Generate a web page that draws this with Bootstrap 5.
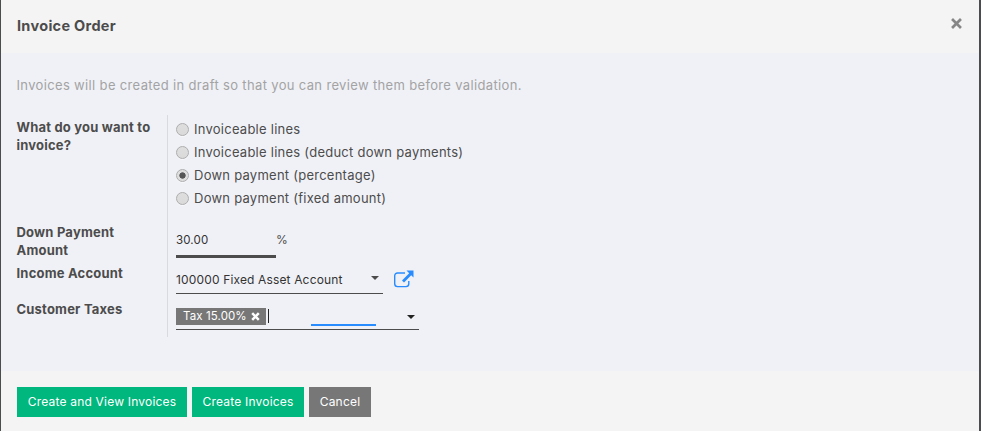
<!DOCTYPE html>
<html lang="en">
<head>
<meta charset="utf-8">
<meta name="viewport" content="width=device-width, initial-scale=1">
<title>Invoice Order</title>
<link href="https://cdn.jsdelivr.net/npm/bootstrap@5.3.0/dist/css/bootstrap.min.css" rel="stylesheet">
<style>
body{font-family:Inter,"Liberation Sans",sans-serif;font-size:13px;line-height:18px;color:#4c4c4c;background:#4b4c4e;overflow:hidden}
.dialog-shell{width:978px;height:431px;margin-left:1px;background:#f0f1f6}
.dialog-head,.dialog-foot{background:#f4f4f4;flex:none;padding:0 16px}
.dialog-head{height:53px;padding-bottom:1px}
.dialog-foot{height:60px;gap:5px;padding-top:2px}
.dialog-head h1{font-size:14.5px;line-height:20px;letter-spacing:.3px;margin:0}
.close-x{width:11px;height:11px;margin:-5px 1px 0 0;padding:0;border:0;background:none;line-height:0;color:#868686}
.body-inner{padding-left:15px}
.hint{color:#a3a3a5;margin:23px 0 21px;padding-left:.5px;letter-spacing:.345px}
.field-label{width:151px;flex:none;font-weight:700;padding:3px 10px 0 .5px;letter-spacing:.2px}
.field-value{border-left:1px solid #d9dadd;padding-left:8px}
.row-choice{height:105px}.row-amount{height:41px}.row-account{height:36px}.row-tax{height:40px}
.choices{padding-top:3px}
.choice{height:23px;gap:5px;letter-spacing:.25px}
.choice span{padding-bottom:2px}
.choice input{appearance:none;width:13px;height:13px;margin:0;border:1px solid #adadad;border-radius:50%;background:linear-gradient(#dedede,#dadada);box-shadow:0 1px 0 #fff8}
.choice input:checked{background:radial-gradient(circle,#555 0 2.8px,#dedede 3.5px)}
.line-input{font-size:12px;color:#333;border:0;background:none;border-radius:0;padding:0;outline:0;letter-spacing:.15px}
.amount-input{width:100px;height:33px;margin-top:5px;border-bottom:3px solid #4c4c4c;font-size:11.5px}
.percent{margin-top:11px;font-size:12px}
.account-box{width:207px;height:33px;padding:5px 4px 0 0;border-bottom:1px solid #4c4c4c}
.account-arrow{margin-top:-4px}
.open-icon{margin:9px 0 0 11px}
.tax-box{width:243px;height:22px;margin-top:11px;border-bottom:1px solid #4c4c4c}
.tax-tag{width:90px;height:17px;background:#777;color:#fff;font-size:11.5px;line-height:17px;padding-left:7px;gap:4px;letter-spacing:.1px}
.text-cursor{width:1px;height:14px;background:#222;margin:1px 0 0 2px}
.loading-line{width:65px;height:2px;background:#288cff;margin:16px 0 0 42px}
.tax-arrow{margin:7px 4px 0 0}
.flat-btn{height:30px;border:0;border-radius:0;color:#fff;font-size:12px;line-height:18px;padding:0;letter-spacing:.2px}
.flat-btn:hover{color:#fff}
.go{background:#00b77d}.stop{background:#777}
.btn-view{width:170px}.btn-create{width:112px}.btn-cancel{width:62px}
svg{display:block;flex:none}
</style>
<script src="https://cdn.jsdelivr.net/npm/bootstrap@5.3.0/dist/js/bootstrap.bundle.min.js"></script>
</head>
<body>
<div class="dialog-shell d-flex flex-column">
  <header class="dialog-head d-flex align-items-center justify-content-between">
    <h1 class="fw-bold">Invoice Order</h1>
    <button class="close-x" aria-label="Close"><svg width="11" height="11" viewBox="0 0 11 11"><path d="M2 2l7 7M9 2l-7 7" stroke="currentColor" stroke-width="2.700" stroke-linecap="square"/></svg></button>
  </header>
  <main class="flex-grow-1 body-inner">
    <p class="hint">Invoices will be created in draft so that you can review them before validation.</p>
    <div class="d-flex row-choice">
      <div class="field-label">What do you want to invoice?</div>
      <div class="field-value choices">
        <label class="choice d-flex align-items-center"><input type="radio" name="mode"><span>Invoiceable lines</span></label>
        <label class="choice d-flex align-items-center"><input type="radio" name="mode"><span>Invoiceable lines (deduct down payments)</span></label>
        <label class="choice d-flex align-items-center"><input type="radio" name="mode" checked><span>Down payment (percentage)</span></label>
        <label class="choice d-flex align-items-center"><input type="radio" name="mode"><span>Down payment (fixed amount)</span></label>
      </div>
    </div>
    <div class="d-flex row-amount">
      <label class="field-label" for="amount">Down Payment Amount</label>
      <div class="field-value d-flex align-items-start"><input id="amount" class="line-input amount-input" value="30.00"><span class="percent">%</span></div>
    </div>
    <div class="d-flex row-account">
      <div class="field-label">Income Account</div>
      <div class="field-value d-flex">
        <div class="line-input account-box d-flex justify-content-between align-items-center"><span>100000 Fixed Asset Account</span><svg class="account-arrow" width="8" height="4" viewBox="0 0 8 4"><path d="M0 0h8L4 4z" fill="#4c4c4c"/></svg></div>
        <svg class="open-icon" width="20" height="18" viewBox="0 0 20 18"><path d="M11 3H3.500A2.800 2.800 0 0 0 .7 5.800v8A2.800 2.800 0 0 0 3.500 16.600h8.500a2.800 2.800 0 0 0 2.800-2.800V11" fill="none" stroke="#288cff" stroke-width="1.400"/><path d="M12.500 .5h7v7l-2.300-2.300-7.200 7.200-2-2 7.200-7.200z" fill="#288cff"/></svg>
      </div>
    </div>
    <div class="d-flex row-tax">
      <div class="field-label">Customer Taxes</div>
      <div class="field-value">
        <div class="tax-box d-flex">
          <div class="tax-tag d-flex align-items-center"><span>Tax 15.00%</span><svg width="9" height="9" viewBox="0 0 9 9"><path d="M1.200 1.200l6.600 6.600M7.800 1.200L1.200 7.800" stroke="#fff" stroke-width="2.500"/></svg></div>
          <div class="text-cursor"></div>
          <div class="loading-line"></div>
          <svg class="ms-auto tax-arrow" width="8" height="4" viewBox="0 0 8 4"><path d="M0 0h8L4 4z" fill="#222"/></svg>
        </div>
      </div>
    </div>
  </main>
  <footer class="dialog-foot d-flex align-items-center">
    <button class="btn flat-btn go btn-view">Create and View Invoices</button>
    <button class="btn flat-btn go btn-create">Create Invoices</button>
    <button class="btn flat-btn stop btn-cancel">Cancel</button>
  </footer>
</div>
</body>
</html>
